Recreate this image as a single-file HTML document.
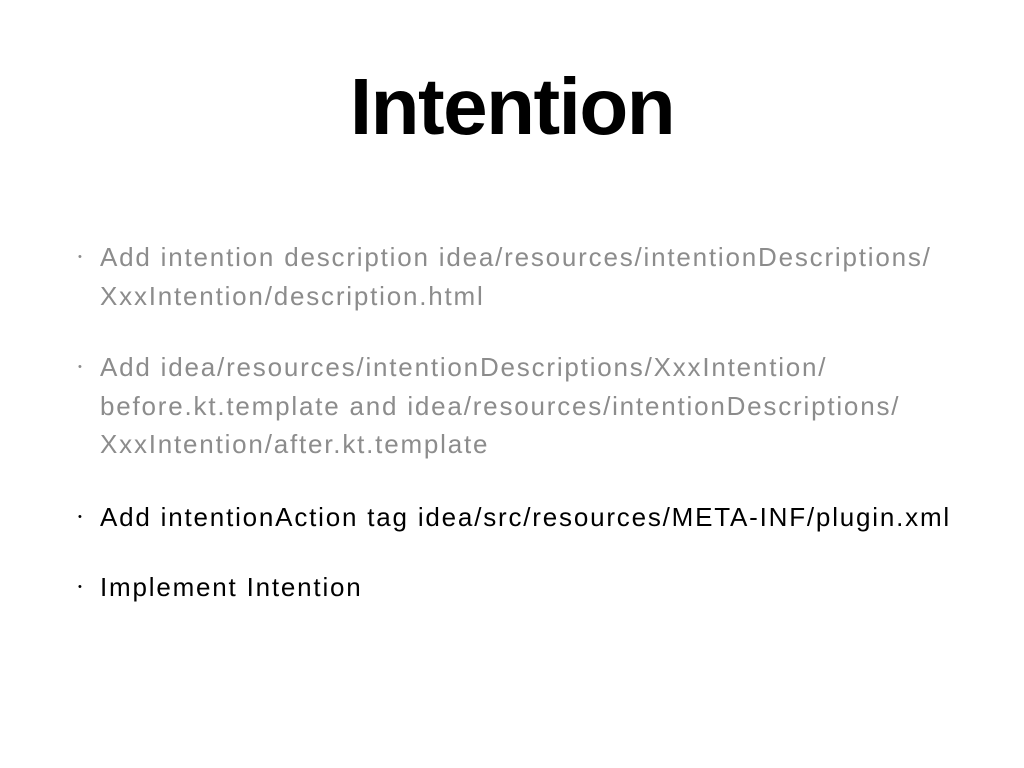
<!DOCTYPE html>
<html><head><style>
body{margin:0;width:1024px;height:768px;background:#fff;font-family:"Liberation Sans",sans-serif;position:relative;overflow:hidden}
h1{position:absolute;top:62px;left:0;width:1024px;text-align:center;margin:0;font-size:80px;font-weight:bold;letter-spacing:-1.5px;color:#000;line-height:90px}
.b{position:absolute;left:100px;font-size:26px;letter-spacing:1.8px;line-height:38.5px;width:900px;white-space:nowrap}
.b::before{content:"•";position:absolute;left:-22px;font-size:11px;letter-spacing:0}
.g{color:#8c8c8c}
.k{color:#000}
</style></head><body>
<h1>Intention</h1>
<div class="b g" style="top:238px">Add intention description idea/resources/intentionDescriptions/<br>XxxIntention/description.html</div>
<div class="b g" style="top:348px">Add idea/resources/intentionDescriptions/XxxIntention/<br>before.kt.template and idea/resources/intentionDescriptions/<br>XxxIntention/after.kt.template</div>
<div class="b k" style="top:498px">Add intentionAction tag idea/src/resources/META-INF/plugin.xml</div>
<div class="b k" style="top:568px">Implement Intention</div>
</body></html>
